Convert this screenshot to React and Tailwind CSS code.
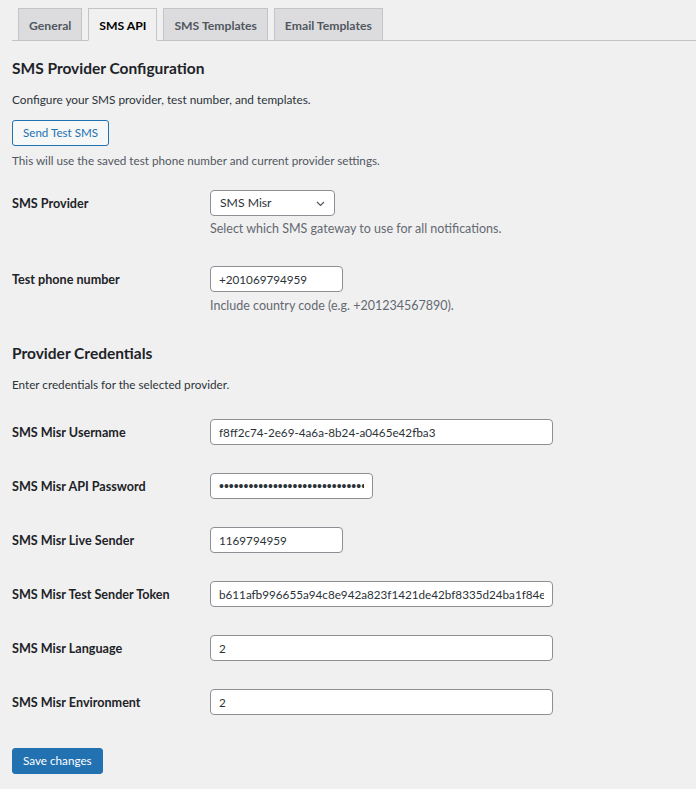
import React from 'react';

const tabs = ['General', 'SMS API', 'SMS Templates', 'Email Templates'];

const inputCls =
  'h-[26px] rounded-[4px] border border-[#8c8f94] bg-white px-[8px] text-[11.7px] text-[#2c3338] outline-none';

const Row = ({ label, children, className = '' }) => (
  <div className={`flex items-center ${className}`}>
    <div className="w-[198px] shrink-0 pt-[2px] text-[12.6px] font-bold text-[#1d2327]">{label}</div>
    {children}
  </div>
);

const credentials = [
  { label: 'SMS Misr Username', value: 'f8ff2c74-2e69-4a6a-8b24-a0465e42fba3', w: 'w-[343px]' },
  { label: 'SMS Misr API Password', value: 'f8ff2c74e69a6a8b24a0465e42fba3xx9', w: 'w-[163px]', type: 'password' },
  { label: 'SMS Misr Live Sender', value: '1169794959', w: 'w-[133px]' },
  { label: 'SMS Misr Test Sender Token', value: 'b611afb996655a94c8e942a823f1421de42bf8335d24ba1f84e2c71d', w: 'w-[343px]' },
  { label: 'SMS Misr Language', value: '2', w: 'w-[343px]' },
  { label: 'SMS Misr Environment', value: '2', w: 'w-[343px]' },
];

export default function App() {
  return (
    <div
      className="min-h-[789px] bg-[#f0f0f1] pl-3 pt-2 text-[#1d2327]"
      style={{ fontFamily: 'Lato, "Noto Sans", sans-serif' }}
    >
      {/* Tabs */}
      <div className="flex gap-[6px] border-b border-[#c3c4c7] pl-[6px]">
        {tabs.map((t) => {
          const active = t === 'SMS API';
          return (
            <div
              key={t}
              className={`-mb-px h-[33px] border px-[10px] pt-[1px] text-[12.2px] font-bold leading-[31px] ${
                active
                  ? 'border-[#c3c4c7] border-b-[#f0f0f1] bg-[#f0f0f1] text-black'
                  : 'border-[#c3c4c7] bg-[#dcdcde] text-[#50575e]'
              }`}
            >
              {t}
            </div>
          );
        })}
      </div>

      <h2 className="mt-[17px] text-[15.5px] font-bold leading-[20px]">SMS Provider Configuration</h2>
      <p className="mt-[13px] text-[11.8px] leading-[18px] text-[#2c3338]">
        Configure your SMS provider, test number, and templates.
      </p>
      <button className="mt-[11px] h-[26px] rounded-[3px] border border-[#2271b1] bg-[#f6f7f7] px-[10px] text-[11.6px] text-[#2271b1]">
        Send Test SMS
      </button>
      <p className="mt-[5px] text-[11.7px] leading-[18px] text-[#50575e]">
        This will use the saved test phone number and current provider settings.
      </p>

      {/* SMS Provider */}
      <Row label="SMS Provider" className="mt-[21px]">
        <div className="relative flex h-[26px] w-[125px] items-center rounded-[4px] border border-[#8c8f94] bg-white pl-[9px] text-[12.2px] text-[#2c3338]">
          SMS Misr
          <svg className="absolute right-[9px] top-[10px]" width="9" height="6" viewBox="0 0 9 6" fill="none">
            <path d="M1 1l3.5 3.5L8 1" stroke="#50575e" strokeWidth="1.2" />
          </svg>
        </div>
      </Row>
      <p className="ml-[198px] mt-[4px] text-[12.5px] leading-[18px] text-[#646970]">
        Select which SMS gateway to use for all notifications.
      </p>

      {/* Test phone */}
      <Row label="Test phone number" className="mt-[28px]">
        <input className={`${inputCls} w-[133px]`} defaultValue="+201069794959" />
      </Row>
      <p className="ml-[198px] mt-[5px] text-[12.5px] leading-[18px] text-[#646970]">
        Include country code (e.g. +201234567890).
      </p>

      <h2 className="mt-[28px] text-[15.5px] font-bold leading-[20px]">Provider Credentials</h2>
      <p className="mt-[12px] text-[11.7px] leading-[18px] text-[#2c3338]">
        Enter credentials for the selected provider.
      </p>

      <div className="mt-[26px] flex flex-col gap-[28px]">
        {credentials.map((c) => (
          <Row key={c.label} label={c.label}>
            <input
              type={c.type || 'text'}
              className={`${inputCls} ${c.w} ${c.type === 'password' ? 'text-[14px] [font-family:"Liberation_Sans",sans-serif]' : ''}`}
              defaultValue={c.value}
            />
          </Row>
        ))}
      </div>

      <button className="mt-[33px] h-[26px] rounded-[3px] border border-[#2271b1] bg-[#2271b1] px-[10px] text-[11.7px] text-white">
        Save changes
      </button>
    </div>
  );
}
